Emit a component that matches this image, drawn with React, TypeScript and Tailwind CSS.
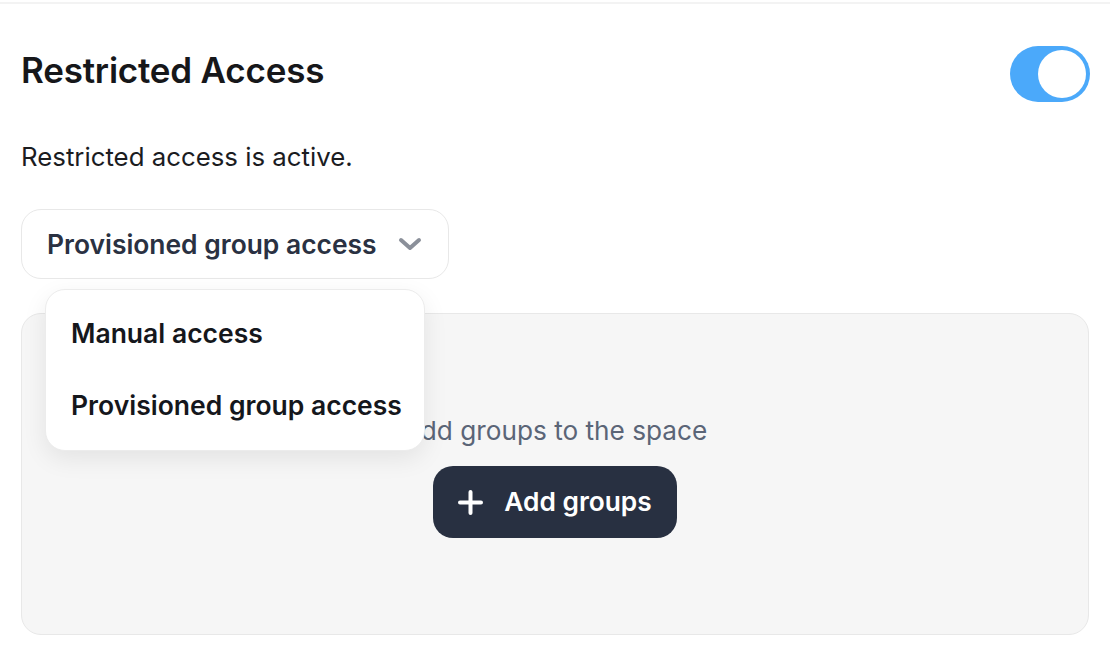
function Toggle() {
  return (
    <div className="flex h-[56px] w-[80px] items-center justify-end rounded-full bg-[#4ba9fa] p-[4px]">
      <div className="h-[48px] w-[48px] rounded-full bg-white" />
    </div>
  );
}

function Chevron() {
  return (
    <svg width="24" height="14" viewBox="0 0 24 14" fill="none">
      <path d="M3 3l9 8 9-8" stroke="#8b909a" strokeWidth="4" strokeLinecap="round" strokeLinejoin="round" />
    </svg>
  );
}

function PlusIcon() {
  return (
    <svg width="25" height="25" viewBox="0 0 25 25" fill="none">
      <path d="M12.5 2v21M2 12.5h21" stroke="white" strokeWidth="4" strokeLinecap="round" />
    </svg>
  );
}

export default function App() {
  return (
    <div className="h-[652px] w-[1110px] overflow-hidden bg-white font-['Inter',sans-serif]">
      <div className="mt-[2px] h-[2px] bg-[#f3f3f3]" />

      <div className="px-[21px]">
        <div className="mt-[42px] flex items-start justify-between">
          <h1 className="mt-[3px] text-[35px] leading-[42px] font-semibold tracking-[-0.2px] text-[#16171a]">
            Restricted Access
          </h1>
          <div className="mr-[-1px]">
            <Toggle />
          </div>
        </div>

        <p className="mt-[39px] text-[25.8px] leading-[32px] text-[#1b1c1f]">Restricted access is active.</p>

        <div className="relative mt-[36px]">
          <button className="flex h-[70px] w-[428px] items-center justify-between rounded-[20px] border border-[#e8e8e8] bg-white pr-[26px] pl-[25px]">
            <span className="whitespace-nowrap text-[26.4px] leading-[32px] font-semibold text-[#2a3142]">
              Provisioned group access
            </span>
            <Chevron />
          </button>

          <div className="absolute top-[80px] left-[24px] z-10 w-[380px] rounded-[20px] border border-[#ececec] bg-white py-[8px] shadow-[0_8px_24px_rgba(0,0,0,0.08)]">
            <div className="flex h-[72px] items-center whitespace-nowrap px-[25px] text-[26.5px] font-semibold text-[#15171c]">
              Manual access
            </div>
            <div className="flex h-[72px] items-center whitespace-nowrap px-[25px] text-[26.5px] font-semibold text-[#15171c]">
              Provisioned group access
            </div>
          </div>

          <div className="mt-[34px] flex h-[322px] flex-col items-center rounded-[20px] border border-[#e8e8e8] bg-[#f6f6f6] pt-[101px]">
            <p className="text-[26.2px] leading-[32px] text-[#5b6577]">Add groups to the space</p>
            <button className="mt-[19px] flex h-[72px] w-[244px] items-center justify-center gap-[21px] rounded-[20px] bg-[#283041] text-[26.3px] font-semibold text-white">
              <PlusIcon />
              Add groups
            </button>
          </div>
        </div>
      </div>
    </div>
  );
}
